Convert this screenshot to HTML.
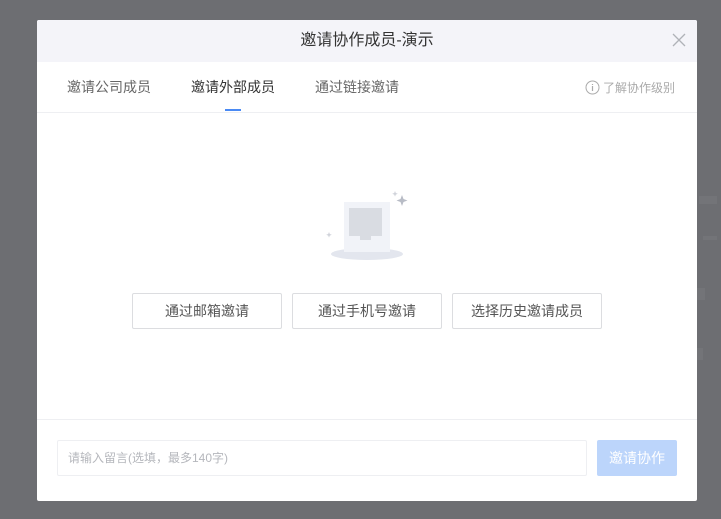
<!DOCTYPE html>
<html><head><meta charset="utf-8"><style>
*{margin:0;padding:0;box-sizing:border-box}
body{width:721px;height:519px;background:#6d6e72;font-family:"Liberation Sans","Noto Sans CJK SC",sans-serif;position:relative;overflow:hidden}
.dlg{position:absolute;left:37px;top:20px;width:660px;height:481px;background:#fff;border-radius:2px;overflow:hidden}
.hd{height:42px;background:#f4f4f9;text-align:center;line-height:42px;font-size:16px;color:#333}
.x{position:absolute;right:10px;top:12px;width:16px;height:16px}
.tab{position:absolute;top:57px;font-size:14px;color:#666}
.ul{position:absolute;left:188px;top:89px;width:16px;height:2px;background:#4a8af4}
.line{position:absolute;left:0;right:0;height:1px;background:#eeeff2}
.btn{position:absolute;top:273px;width:150px;height:36px;border:1px solid #dcdde0;border-radius:2px;text-align:center;line-height:34px;font-size:14px;color:#555}
.inp{position:absolute;left:20px;top:420px;width:530px;height:36px;border:1px solid #eeeff2;border-radius:2px;font-size:12px;color:#b5b7bc;line-height:34px;padding-left:10px}
.sb{position:absolute;left:560px;top:420px;width:80px;height:36px;background:#bcd5fb;border-radius:2px;color:#fff;font-size:14px;text-align:center;line-height:36px}
.side{position:absolute;background:#737478}
</style></head><body>
<div class="side" style="left:699px;top:196px;width:18px;height:8px"></div>
<div class="side" style="left:703px;top:236px;width:14px;height:4px"></div>
<div class="side" style="left:697px;top:288px;width:8px;height:12px"></div>
<div class="side" style="left:697px;top:348px;width:6px;height:12px"></div>
<div class="dlg">
<div class="hd">邀请协作成员-演示</div>
<svg class="x" viewBox="0 0 16 16"><path d="M2 2L14 14M14 2L2 14" stroke="#b0b2b8" stroke-width="1.3"/></svg>
<div class="tab" style="left:30px">邀请公司成员</div>
<div class="tab" style="left:154px;color:#333">邀请外部成员</div>
<div class="tab" style="left:278px">通过链接邀请</div>
<div class="tab" style="left:548px;font-size:12px;color:#aaa;top:59px"><svg width="15" height="15" viewBox="0 0 15 15" style="vertical-align:-3px;margin-right:3px"><circle cx="7.5" cy="7.5" r="6.5" fill="none" stroke="#aaa"/><path d="M7.5 6v5M7.5 4v1" stroke="#aaa" stroke-width="1.2"/></svg>了解协作级别</div>
<div class="ul"></div>
<div class="line" style="top:92px"></div>
<svg style="position:absolute;left:285px;top:170px" width="90" height="75" viewBox="0 0 90 75">
<ellipse cx="45" cy="64" rx="36" ry="6" fill="#e3e6ee"/>
<rect x="22" y="12" width="46" height="50" fill="#f1f3f8"/>
<rect x="27" y="18" width="33" height="28" fill="#d9dce2"/>
<rect x="38" y="46" width="11" height="4" fill="#d9dce2"/>
<path d="M80 5l1.5 4 4 1.5-4 1.5-1.5 4-1.5-4-4-1.5 4-1.5z" fill="#b8bcc6"/>
<path d="M73 1l.8 2 2 .8-2 .8-.8 2-.8-2-2-.8 2-.8z" fill="#d0d3da"/>
<path d="M27 34" fill="none"/>
<path d="M7 42l.8 2 2 .8-2 .8-.8 2-.8-2-2-.8 2-.8z" fill="#d0d3da"/>
</svg>
<div class="btn" style="left:95px">通过邮箱邀请</div>
<div class="btn" style="left:255px">通过手机号邀请</div>
<div class="btn" style="left:415px">选择历史邀请成员</div>
<div class="line" style="top:399px"></div>
<div class="inp">请输入留言(选填，最多140字)</div>
<div class="sb">邀请协作</div>
</div>
</body></html>
